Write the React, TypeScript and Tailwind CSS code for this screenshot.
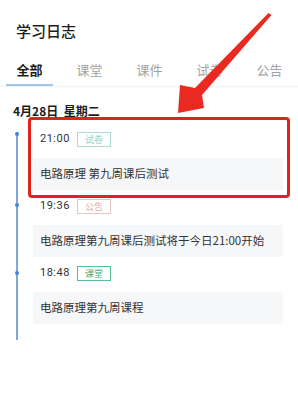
import React from 'react';

// One entry per timeline row
interface LogItem {
  time: string;
  tag: string;
  tagClass: string;
  text: string;
  dotClass: string;
}

const tabs = ['全部', '课堂', '课件', '试卷', '公告'];

const items: LogItem[] = [
  {
    time: '21:00',
    tag: '试卷',
    tagClass: 'border-[#a9ddd5] text-[#8fd0c6]',
    text: '电路原理 第九周课后测试',
    dotClass: 'top-[7px]',
  },
  {
    time: '19:36',
    tag: '公告',
    tagClass: 'border-[#e8c4c4] text-[#e3aaaa]',
    text: '电路原理第九周课后测试将于今日21:00开始',
    dotClass: 'top-[11px]',
  },
  {
    time: '18:48',
    tag: '课堂',
    tagClass: 'border-[#59bd93] text-[#3ea879]',
    text: '电路原理第九周课程',
    dotClass: 'top-[12px]',
  },
];

const App: React.FC = () => {
  return (
    <div className="relative w-[298px] h-[400px] overflow-hidden bg-white font-['Noto_Sans_CJK_SC','Noto_Sans',sans-serif]">
      <div className="pt-[21px] pl-4 text-[15px] leading-[20px] font-medium text-[#1c1c1c]">学习日志</div>

      {/* tabs */}
      <div className="mt-[19px] flex gap-[13px] pl-[6px] border-b border-[#f1f1f1]">
        {tabs.map((t, i) => (
          <div key={t} className="w-[47px] flex flex-col items-center">
            <span
              className={
                i === 0
                  ? 'text-[13px] leading-[20px] font-bold text-[#1c1c1c]'
                  : 'text-[13px] leading-[20px] text-[#a3a3a3]'
              }
            >
              {t}
            </span>
            <div className={i === 0 ? 'mt-[4px] h-[2px] w-full bg-[#9cc6ea]' : 'mt-[4px] h-[2px] w-full'} />
          </div>
        ))}
      </div>

      <div className="mt-[17px] pl-[13px] text-[12px] leading-[14px] font-bold text-[#1c1c1c]">4月28日&nbsp;&nbsp;星期二</div>

      {/* timeline */}
      <div className="relative mt-[7px] ml-[16px] pb-[14px]">
        <div className="absolute left-0 top-[7px] bottom-0 w-[2px] bg-[#7ea6df]" />
        {items.map((it, i) => (
          <div key={i} className="relative mb-[2px]">
            <div className={`absolute left-[-1px] w-[4px] h-[4px] rounded-full bg-[#3f86e0] ${it.dotClass}`} />
            <div className="h-[28px] flex items-center pl-[24px]">
              <span className="text-[11px] text-[#333] font-['Roboto',sans-serif] tracking-[0.5px]">{it.time}</span>
              <span
                className={`ml-[7px] w-[34px] h-[15px] border flex items-center justify-center text-[9px] leading-none ${it.tagClass}`}
              >
                {it.tag}
              </span>
            </div>
            <div className="mt-[5px] ml-[17px] w-[250px] h-[32px] bg-[#f6f7f9] flex items-center pl-[7px] text-[11.5px] whitespace-nowrap text-[#333]">
              {it.text}
            </div>
          </div>
        ))}
      </div>

      {/* red annotation box */}
      <div className="absolute left-[28px] top-[117px] w-[262px] h-[81px] border-[3px] border-[#e3221b] rounded-[4px]" />

      {/* red arrow */}
      <svg className="absolute left-0 top-0" width="298" height="400" viewBox="0 0 298 400">
        <polygon
          points="271.5,15 202,95 204,108 178,113 180,85 195,88 268.5,13"
          fill="#ea2a20"
        />
      </svg>
    </div>
  );
};

export default App;
